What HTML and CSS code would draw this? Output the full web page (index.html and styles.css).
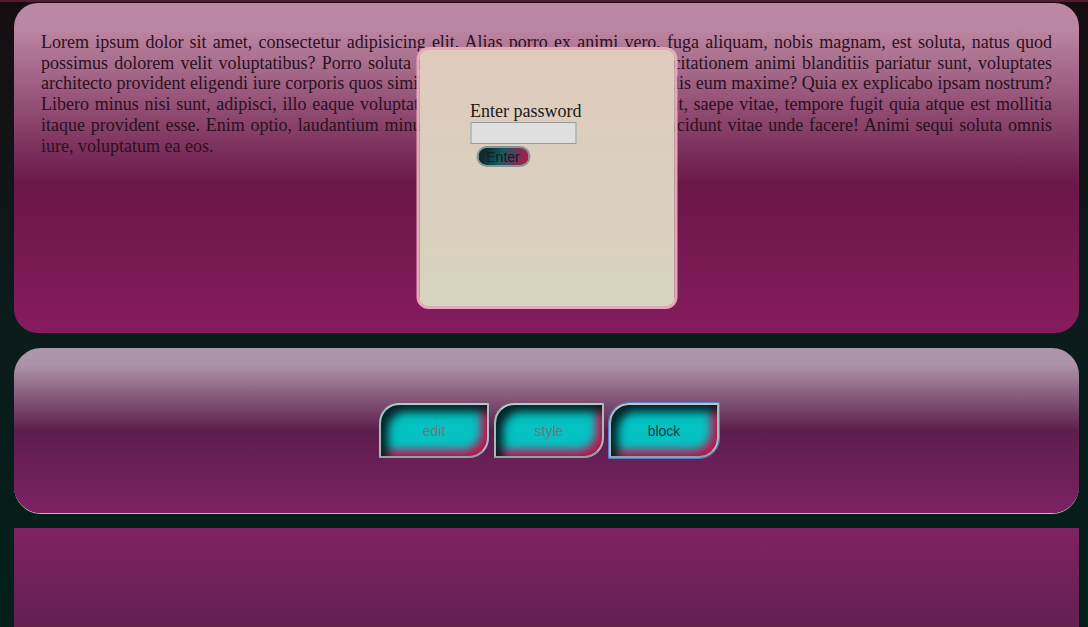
FILE: index.html
```html
<!DOCTYPE html>
<html>
<head>
<meta charset="utf-8">
<link rel="stylesheet" href="styles.css">
</head>
<body>
<div class="page">
  <section class="panel panel-text">
    <p class="lorem">Lorem ipsum dolor sit amet, consectetur adipisicing elit. Alias porro ex animi vero, fuga aliquam, nobis magnam, est soluta, natus quod possimus dolorem velit voluptatibus? Porro soluta quibusdam tempora doloribus exercitationem animi blanditiis pariatur sunt, voluptates architecto provident eligendi iure corporis quos similique nihil ipsam, commodi reiciendis eum maxime? Quia ex explicabo ipsam nostrum? Libero minus nisi sunt, adipisci, illo eaque voluptatem dolores ab eveniet nobis quaerat, saepe vitae, tempore fugit quia atque est mollitia itaque provident esse. Enim optio, laudantium minus, natus dolorem aut beatae ipsa incidunt vitae unde facere! Animi sequi soluta omnis iure, voluptatum ea eos.</p>
    <div class="modal">
      <label class="pw-label">Enter password</label>
      <input class="pw-input" type="password">
      <button class="pw-btn">Enter</button>
    </div>
  </section>
  <section class="panel panel-tools">
    <button class="tool disabled">edit</button>
    <button class="tool disabled">style</button>
    <button class="tool focused">block</button>
  </section>
  <section class="panel panel-bottom"></section>
</div>
</body>
</html>
```

FILE: styles.css
```css
html, body {
  margin: 0;
  padding: 0;
}
body {
  border-top: 2px solid #561a30;
  background: linear-gradient(#170d11 0%, #0b1b1b 50%, #022019 100%);
  min-height: 625px;
  overflow: hidden;
}
.page {
  display: flex;
  flex-direction: column;
  gap: 15px;
  padding: 1px 9px 0 14px;
}
.panel {
  box-sizing: border-box;
  width: 1065px;
}
.panel-text {
  position: relative;
  height: 330px;
  border-radius: 24px;
  background: linear-gradient(#bd88a3 0%, #bb86a1 8%, #6a1748 55%, #861b5e 100%);
  padding: 29px 27px 0 27px;
}
.lorem {
  margin: 0;
  font-family: "Liberation Serif", serif;
  font-size: 18px;
  line-height: 20.7px;
  text-align: justify;
  color: #2a1020;
}
.modal {
  position: absolute;
  left: 50%;
  top: 44px;
  transform: translateX(-50%);
  width: 261px;
  height: 262px;
  box-sizing: border-box;
  border: 3px solid #e2aab8;
  border-radius: 12px;
  background: linear-gradient(#e0cbbe, #d6d4c0);
  padding: 51px 0 0 51px;
  display: flex;
  flex-direction: column;
  align-items: flex-start;
}
.pw-label {
  display: block;
  font-family: "Liberation Serif", serif;
  font-size: 18px;
  line-height: 21px;
  color: #201818;
}
.pw-input {
  width: 106px;
  height: 22px;
  box-sizing: border-box;
  margin: 0;
  border: 1px solid #999999;
  background: #e0dfe0;
}
.pw-btn {
  margin: 2px 0 0 6px;
  width: 54px;
  height: 21px;
  box-sizing: border-box;
  border: 2px solid #8a9494;
  border-radius: 11px;
  padding: 0;
  font-family: "Liberation Sans", sans-serif;
  font-size: 14px;
  line-height: 16px;
  color: #0c2024;
  background: linear-gradient(110deg, #0d2c30 15%, #175a60 45%, #c0124a 100%);
}
.panel-tools {
  height: 165px;
  border-radius: 27px;
  background: linear-gradient(#ae96aa 0%, #ac94a8 10%, #5c1e4c 50%, #7d2264 100%);
  box-shadow: 0 1px 0 #cfb0c6;
  display: flex;
  align-items: center;
  justify-content: center;
  gap: 5px;
  padding-left: 5px;
}
.tool {
  width: 110px;
  height: 55px;
  box-sizing: border-box;
  border: 2px solid #a6bcbc;
  border-top-color: #b8c8c8;
  border-bottom-color: #88a4a4;
  border-radius: 20px 0 20px 0;
  background: #04c2c2;
  box-shadow: inset 7px 7px 10px rgba(4, 24, 26, 0.95), inset -6px -6px 10px #c0124c;
  font-family: "Liberation Sans", sans-serif;
  font-size: 14px;
  color: #0b3c40;
  padding: 0;
}
.tool.disabled {
  color: #687a7c;
}
.tool.focused {
  outline: 1px solid #5c7ccc;
}
.panel-bottom {
  height: 110px;
  background: linear-gradient(#7f2263, #60204f);
}
```
